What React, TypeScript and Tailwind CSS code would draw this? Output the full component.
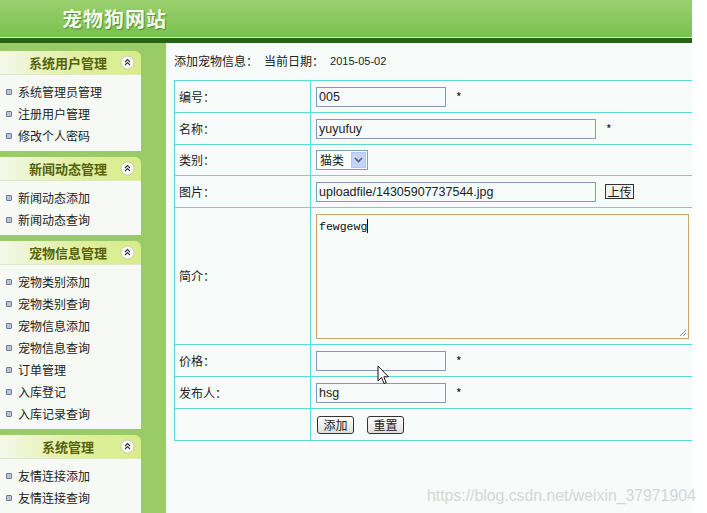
import React from "react";

const menuGroups = [
  {
    title: "系统用户管理",
    items: ["系统管理员管理", "注册用户管理", "修改个人密码"],
  },
  {
    title: "新闻动态管理",
    items: ["新闻动态添加", "新闻动态查询"],
  },
  {
    title: "宠物信息管理",
    items: [
      "宠物类别添加",
      "宠物类别查询",
      "宠物信息添加",
      "宠物信息查询",
      "订单管理",
      "入库登记",
      "入库记录查询",
    ],
  },
  {
    title: "系统管理",
    items: ["友情连接添加", "友情连接查询"],
  },
];

const CollapseIcon = () => (
  <svg width="15" height="15" viewBox="0 0 15 15" className="shrink-0">
    <circle cx="7.5" cy="7.5" r="6.5" fill="#fdfdf8" stroke="#c9ccb8" strokeWidth="1" />
    <polyline points="5,7 7.5,4.5 10,7" fill="none" stroke="#333" strokeWidth="1.1" />
    <polyline points="5,10 7.5,7.5 10,10" fill="none" stroke="#333" strokeWidth="1.1" />
  </svg>
);

const Bullet = () => (
  <span className="w-[6px] h-[6px] rounded-[1px] border border-[#6b7a99] bg-[#bcc6d8] shrink-0" />
);

const Star = () => <span className="ml-[10px] text-[12px] text-[#111]">*</span>;

const inputCls =
  "h-[20px] border border-[#7f9db9] bg-[#f7fcfa] px-[2px] text-[12.5px] text-[#222] font-['Liberation_Sans',sans-serif] leading-[18px]";

export default function App() {
  return (
    <div className="relative min-h-[513px] w-[707px] bg-white font-['Noto_Sans_CJK_SC',sans-serif]">
      <div className="w-[692px] min-h-[513px] flex flex-col">
        {/* header */}
        <div className="h-[37px] bg-linear-to-b from-[#9bcf6f] to-[#79c24d] flex items-center pl-[62px]">
          <span className="text-[20px] font-bold text-[#f4faec] tracking-[1px] [text-shadow:1px_1px_1px_#4d8a2c]">
            宠物狗网站
          </span>
        </div>
        <div className="h-[1px] bg-[#e6f3d8]" />
        <div className="h-[5px] bg-[#286212]" />

        <div className="flex flex-1">
          {/* sidebar */}
          <div className="w-[166px] bg-[#99cc66] pt-[8px] flex flex-col gap-[6px]">
            {menuGroups.map((group) => (
              <div key={group.title} className="w-[141px]">
                <div className="h-[24px] rounded-tr-[6px] bg-linear-to-r from-[#f5f8ea] via-[#e2f0a4] to-[#d7ec88] border-b border-[#dfe8c4] flex items-center pl-[16px] pr-[6px]">
                  <span className="flex-1 text-center text-[13px] font-bold text-[#56630c]">
                    {group.title}
                  </span>
                  <CollapseIcon />
                </div>
                <div className="bg-[#f7faf4] pt-[6px] pb-[4px]">
                  {group.items.map((item) => (
                    <div key={item} className="h-[22px] flex items-center pl-[6px] gap-[6px] text-[12px] text-[#222]">
                      <Bullet />
                      <span>{item}</span>
                    </div>
                  ))}
                </div>
              </div>
            ))}
          </div>

          {/* content */}
          <div className="flex-1 bg-[#f7fcfa] pl-[8px] pt-[10px]">
            <div className="h-[16px] mb-[11px] text-[12px] text-[#222] leading-[16px] flex items-center">
              <span>添加宠物信息：</span>
              <span className="ml-[6px]">当前日期：</span>
              <span className="ml-[6px] text-[11px] font-['Liberation_Sans',sans-serif]">2015-05-02</span>
            </div>

            <table className="w-[518px] border-collapse text-[12px] text-[#222]">
              <tbody>
                <tr className="h-[32px]">
                  <td className="w-[136px] border border-[#5fd8d8] pl-[4px]">编号：</td>
                  <td className="border-y border-l border-[#5fd8d8] pl-[5px]">
                    <div className="flex items-center">
                      <div className={`${inputCls} w-[130px]`}>005</div>
                      <Star />
                    </div>
                  </td>
                </tr>
                <tr className="h-[32px]">
                  <td className="border border-[#5fd8d8] pl-[4px]">名称：</td>
                  <td className="border-y border-l border-[#5fd8d8] pl-[5px]">
                    <div className="flex items-center">
                      <div className={`${inputCls} w-[280px]`}>yuyufuy</div>
                      <Star />
                    </div>
                  </td>
                </tr>
                <tr className="h-[31px]">
                  <td className="border border-[#5fd8d8] pl-[4px]">类别：</td>
                  <td className="border-y border-l border-[#5fd8d8] pl-[5px]">
                    <div className="w-[52px] h-[20px] border border-[#7f9db9] bg-white flex items-center justify-between pl-[3px] pr-[1px]">
                      <span className="text-[12px]">猫类</span>
                      <span className="w-[15px] h-[16px] bg-[#c3d4f6] border border-[#b1c5ef] flex items-center justify-center">
                        <svg width="9" height="6" viewBox="0 0 9 6">
                          <polyline points="1,1 4.5,4.5 8,1" fill="none" stroke="#4d6185" strokeWidth="1.6" />
                        </svg>
                      </span>
                    </div>
                  </td>
                </tr>
                <tr className="h-[32px]">
                  <td className="border border-[#5fd8d8] pl-[4px]">图片：</td>
                  <td className="border-y border-l border-[#5fd8d8] pl-[5px]">
                    <div className="flex items-center">
                      <div className={`${inputCls} w-[280px]`}>uploadfile/14305907737544.jpg</div>
                      <button className="ml-[9px] h-[15px] w-[29px] border border-[#333] bg-[#f3f3ee] text-[12px] leading-[13px] flex items-center justify-center">
                        上传
                      </button>
                    </div>
                  </td>
                </tr>
                <tr className="h-[137px]">
                  <td className="border border-[#5fd8d8] pl-[4px]">简介：</td>
                  <td className="border-y border-l border-[#5fd8d8] pl-[5px]">
                    <div className="relative w-[373px] h-[125px] border border-[#c8a466] bg-[#f7fcfa] px-[2px] pt-[1px]">
                      <span className="text-[11.5px] font-['Liberation_Mono',monospace] text-[#111]">fewgewg</span>
                      <span className="inline-block w-[1px] h-[14px] bg-black align-middle" />
                      <svg className="absolute right-[1px] bottom-[1px]" width="9" height="9" viewBox="0 0 9 9">
                        <line x1="8" y1="2" x2="2" y2="8" stroke="#888" strokeWidth="1" />
                        <line x1="8" y1="5" x2="5" y2="8" stroke="#888" strokeWidth="1" />
                      </svg>
                    </div>
                  </td>
                </tr>
                <tr className="h-[32px]">
                  <td className="border border-[#5fd8d8] pl-[4px]">价格：</td>
                  <td className="border-y border-l border-[#5fd8d8] pl-[5px]">
                    <div className="flex items-center">
                      <div className={`${inputCls} w-[130px]`} />
                      <Star />
                    </div>
                  </td>
                </tr>
                <tr className="h-[32px]">
                  <td className="border border-[#5fd8d8] pl-[4px]">发布人：</td>
                  <td className="border-y border-l border-[#5fd8d8] pl-[5px]">
                    <div className="flex items-center">
                      <div className={`${inputCls} w-[130px]`}>hsg</div>
                      <Star />
                    </div>
                  </td>
                </tr>
                <tr className="h-[32px]">
                  <td className="border border-[#5fd8d8]" />
                  <td className="border-y border-l border-[#5fd8d8] pl-[6px]">
                    <div className="flex items-center gap-[13px]">
                      <button className="h-[18px] w-[37px] rounded-[3px] border border-[#333] bg-linear-to-b from-white to-[#dedede] text-[12px] leading-[16px]">
                        添加
                      </button>
                      <button className="h-[18px] w-[37px] rounded-[3px] border border-[#333] bg-linear-to-b from-white to-[#dedede] text-[12px] leading-[16px]">
                        重置
                      </button>
                    </div>
                  </td>
                </tr>
              </tbody>
            </table>
          </div>
        </div>
      </div>

      {/* mouse pointer */}
      <svg className="absolute left-[377px] top-[365px]" width="13" height="21" viewBox="0 0 13 21">
        <path d="M1 1 L1 16 L4.5 12.5 L7 18.5 L9.2 17.6 L6.8 11.8 L11.5 11.8 Z" fill="white" stroke="#111" strokeWidth="1" strokeLinejoin="round" />
      </svg>

      {/* watermark */}
      <div className="absolute left-[427px] top-[484px] text-[15.8px] text-[#d3d7d7] font-['Liberation_Sans',sans-serif]">
        https://blog.csdn.net/weixin_37971904
      </div>
    </div>
  );
}
